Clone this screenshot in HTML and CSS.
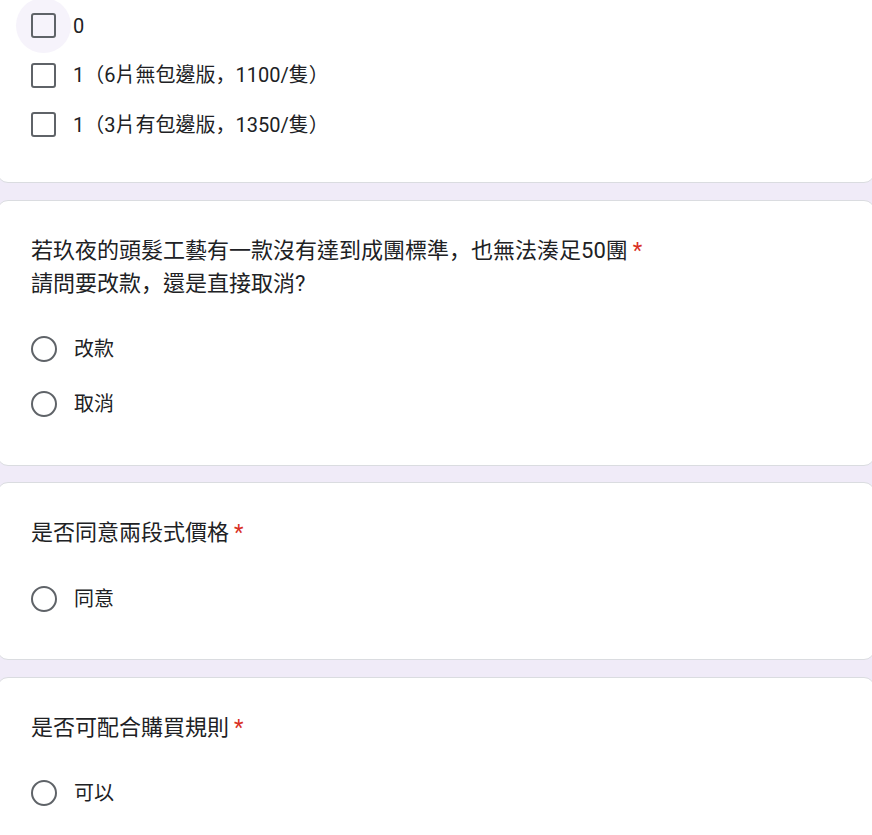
FILE: index.html
```html
<!DOCTYPE html>
<html lang="zh-Hant">
<head>
<meta charset="utf-8">
<title>表單</title>
<link rel="stylesheet" href="styles.css">
</head>
<body>
<div class="page">
  <div class="card card-first">
    <div class="options check-list">
      <div class="opt check-opt"><span class="box hovered"></span><span class="label">0</span></div>
      <div class="opt check-opt"><span class="box"></span><span class="label">1<span class="punct" lang="zh-Hans">（</span>6片無包邊版<span class="punct" lang="zh-Hans">，</span>1100/隻<span class="punct" lang="zh-Hans">）</span></span></div>
      <div class="opt check-opt"><span class="box"></span><span class="label">1<span class="punct" lang="zh-Hans">（</span>3片有包邊版<span class="punct" lang="zh-Hans">，</span>1350/隻<span class="punct" lang="zh-Hans">）</span></span></div>
    </div>
  </div>

  <div class="card">
    <div class="title">若玖夜的頭髮工藝有一款沒有達到成團標準<span class="punct" lang="zh-Hans">，</span>也無法湊足50團<span class="req">*</span><br>請問要改款<span class="punct" lang="zh-Hans">，</span>還是直接取消?</div>
    <div class="options radio-list">
      <div class="opt radio-opt"><span class="radio"></span><span class="label">改款</span></div>
      <div class="opt radio-opt"><span class="radio"></span><span class="label">取消</span></div>
    </div>
  </div>

  <div class="card">
    <div class="title">是否同意兩段式價格<span class="req">*</span></div>
    <div class="options radio-list">
      <div class="opt radio-opt"><span class="radio"></span><span class="label">同意</span></div>
    </div>
  </div>

  <div class="card">
    <div class="title">是否可配合購買規則<span class="req">*</span></div>
    <div class="options radio-list">
      <div class="opt radio-opt"><span class="radio"></span><span class="label">可以</span></div>
    </div>
  </div>
</div>
</body>
</html>
```

FILE: styles.css
```css
html, body {
  margin: 0;
  padding: 0;
  background: #f0ebf8;
  overflow-x: hidden;
}

body {
  font-family: Roboto, "Noto Sans CJK TC", "Noto Sans", sans-serif;
  color: #202124;
}

.page {
  margin: 0 -3px;
  display: flex;
  flex-direction: column;
  gap: 16.5px;
  padding-bottom: 40px;
}

.card {
  background: #ffffff;
  border: 1px solid #dadce0;
  border-radius: 11px;
  padding: 33px;
}

.card-first {
  margin-top: -33.25px;
  border-top-left-radius: 0;
  border-top-right-radius: 0;
}

.title {
  font-size: 22px;
  line-height: 33px;
  font-weight: 400;
}

.punct {
  font-family: "Noto Sans CJK SC", "Noto Sans CJK TC", sans-serif;
  line-height: 0;
}

.req {
  color: #d93025;
  margin-left: 5px;
}

.title + .options {
  margin-top: 22px;
}

.opt {
  display: flex;
  align-items: center;
  font-size: 20px;
  line-height: 26px;
}

.check-opt {
  height: 49.5px;
}

.radio-opt {
  height: 55px;
}

.box {
  position: relative;
  width: 25px;
  height: 25px;
  box-sizing: border-box;
  border: 2.6px solid #5f6368;
  border-radius: 3px;
  flex: none;
}

.box.hovered::before {
  content: "";
  position: absolute;
  left: 50%;
  top: 50%;
  width: 55px;
  height: 55px;
  margin: -27.5px 0 0 -27.5px;
  border-radius: 50%;
  background: #f6f3fb;
  z-index: -1;
}

.check-list {
  position: relative;
  z-index: 0;
}

.radio {
  width: 26px;
  height: 26px;
  box-sizing: border-box;
  border: 2.6px solid #5f6368;
  border-radius: 50%;
  flex: none;
}

.label {
  margin-left: 17px;
}
```
